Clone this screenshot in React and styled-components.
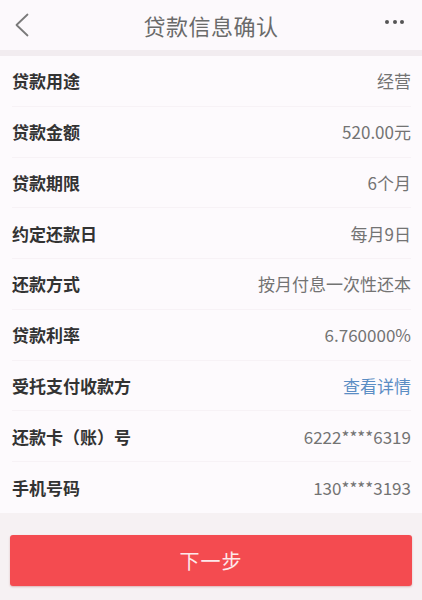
import React from 'react';
import styled, { createGlobalStyle } from 'styled-components';

const rows = [
  { label: '贷款用途', value: '经营' },
  { label: '贷款金额', value: '520.00元' },
  { label: '贷款期限', value: '6个月' },
  { label: '约定还款日', value: '每月9日' },
  { label: '还款方式', value: '按月付息一次性还本' },
  { label: '贷款利率', value: '6.760000%' },
  { label: '受托支付收款方', value: '查看详情', link: true },
  { label: '还款卡（账）号', value: '6222****6319' },
  { label: '手机号码', value: '130****3193' },
];

const App = () => (
  <Page>
    <GlobalStyle />
    <Header>
      <IconButton aria-label="back">
        <svg width="16" height="24" viewBox="0 0 16 24">
          <path d="M13.5 1.5 L2.5 12 L13.5 22.5" fill="none" stroke="#7a7a7a" strokeWidth="1.8" strokeLinecap="round" strokeLinejoin="round" />
        </svg>
      </IconButton>
      <Title>贷款信息确认</Title>
      <IconButton aria-label="more">
        <Dots>
          <i /><i /><i />
        </Dots>
      </IconButton>
    </Header>
    <List>
      {rows.map(row => (
        <Row key={row.label}>
          <Label>{row.label}</Label>
          <Value $link={row.link}>{row.value}</Value>
        </Row>
      ))}
    </List>
    <Footer>
      <NextButton>下一步</NextButton>
    </Footer>
  </Page>
);

export default App;

const GlobalStyle = createGlobalStyle`
  html, body {
    margin: 0;
    padding: 0;
    background: #f6f1f3;
  }
  body {
    font-family: "Noto Sans CJK SC", "Noto Sans", sans-serif;
  }
`;

const Page = styled.div`
  width: 422px;
  min-height: 600px;
  background: #f6f1f3;
`;

const Header = styled.div`
  height: 50px;
  display: flex;
  align-items: center;
  justify-content: space-between;
  padding: 0 10px 0 10px;
  background: #fcf9fc;
  border-bottom: 6px solid #f2ecf0;
`;

const IconButton = styled.div`
  width: 24px;
  height: 30px;
  display: flex;
  align-items: center;
  justify-content: center;
`;

const Dots = styled.div`
  display: flex;
  gap: 3.5px;
  margin-left: -10px;
  margin-top: -6px;

  i {
    width: 4px;
    height: 4px;
    border-radius: 50%;
    background: #555;
  }
`;

const Title = styled.div`
  font-size: 22px;
  color: #6a6a6a;
  letter-spacing: 0.5px;
`;

const List = styled.div`
  background: #fdfafd;
  padding: 0 11px 0 12px;
`;

const Row = styled.div`
  height: 50.75px;
  box-sizing: border-box;
  display: flex;
  align-items: center;
  justify-content: space-between;
  border-bottom: 1px solid #f7f2f6;

  &:last-child {
    border-bottom: none;
  }
`;

const Label = styled.div`
  font-size: 17px;
  font-weight: 700;
  color: #333;
`;

const Value = styled.div`
  font-size: 17px;
  color: ${p => (p.$link ? '#5b8dc4' : '#737373')};
`;

const Footer = styled.div`
  padding: 22px 10px 14px;
`;

const NextButton = styled.div`
  height: 51px;
  border-radius: 3px;
  background: #f44b50;
  color: #fde8ea;
  font-size: 20px;
  display: flex;
  align-items: center;
  justify-content: center;
  letter-spacing: 1px;
  box-shadow: 0 1px 2px rgba(160, 40, 40, 0.3);
`;
